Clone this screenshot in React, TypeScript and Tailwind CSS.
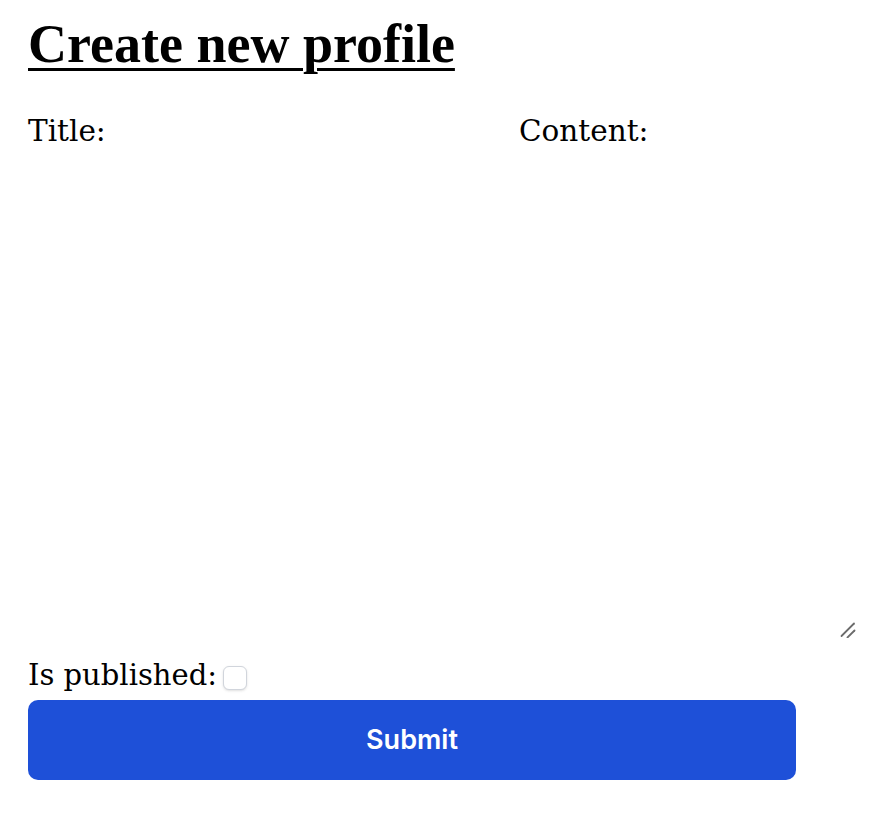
const ResizeGrip = () => (
  <svg
    className="pointer-events-none absolute right-[2px] bottom-0 h-4 w-4"
    viewBox="0 0 16 16"
    fill="none"
    stroke="#6b6b6b"
    strokeWidth="1.8"
    strokeLinecap="round"
  >
    <path d="M1.5 14 L14 1.5" />
    <path d="M7.5 15.5 L14.5 8.5" />
  </svg>
);

const App = () => {
  return (
    <div className="bg-white pt-[14px] pr-5 pl-7 font-['DejaVu_Serif',serif] text-black">
      <h1 className="font-['Liberation_Serif',serif] text-[54px] leading-[60px] font-bold underline decoration-[3px] underline-offset-[6px]">
        Create new profile
      </h1>
      <form className="mt-[38px]" onSubmit={(e) => e.preventDefault()}>
        <div className="flex">
          <div className="flex w-[491px] shrink-0 flex-col">
            <label htmlFor="title" className="text-[29.5px] leading-[38px]">
              Title:
            </label>
            <input
              id="title"
              type="text"
              className="h-10 w-[440px] bg-transparent outline-none"
            />
          </div>
          <div className="flex flex-1 flex-col">
            <label htmlFor="content" className="text-[29.5px] leading-[38px]">
              Content:
            </label>
            <div className="relative mt-[2px] w-[339px]">
              <textarea
                id="content"
                className="block h-[486px] w-full resize-none bg-transparent outline-none"
              />
              <ResizeGrip />
            </div>
          </div>
        </div>
        <div className="mt-[18px] flex items-center gap-[6px]">
          <label htmlFor="published" className="text-[29px] leading-[38px]">
            Is published:
          </label>
          <input
            id="published"
            type="checkbox"
            className="mt-[6px] h-6 w-6 appearance-none rounded-md border border-gray-300 bg-white shadow-sm"
          />
        </div>
        <button
          type="submit"
          className="mt-[6px] h-20 w-[768px] rounded-[10px] bg-[#1e50d8] font-['Inter',sans-serif] text-[27px] font-semibold text-white"
        >
          Submit
        </button>
      </form>
    </div>
  );
};

export default App;
